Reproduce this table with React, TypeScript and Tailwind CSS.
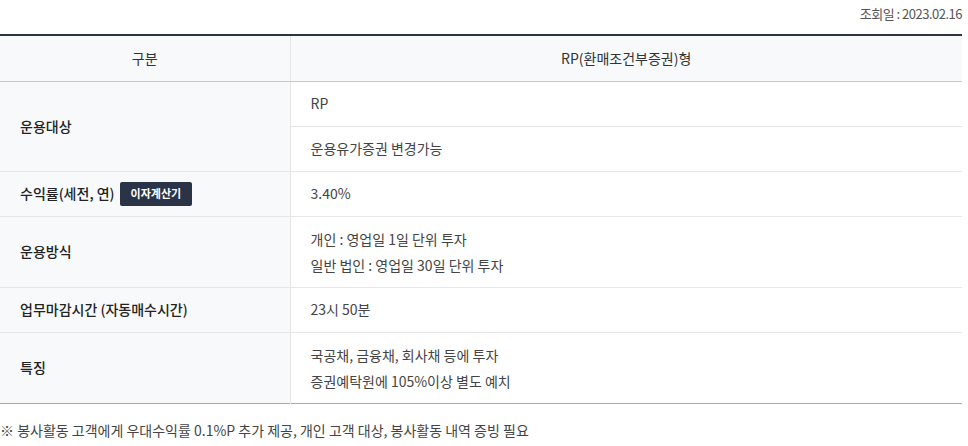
import React from 'react';

const font = { fontFamily: '"Noto Sans CJK KR", "Noto Sans", sans-serif' };

function Th({ children, rowSpan }: { children: React.ReactNode; rowSpan?: number }) {
  return (
    <th
      rowSpan={rowSpan}
      className="border-b border-r border-[#e6e6e6] bg-[#f8f9fb] pl-5 text-left align-middle text-[14px] font-medium text-[#222]"
    >
      {children}
    </th>
  );
}

function Td({ children, lines = 1 }: { children: React.ReactNode; lines?: number }) {
  return (
    <td
      className={`border-b border-[#e6e6e6] pl-5 align-middle text-[14px] text-[#444] ${lines > 1 ? 'h-[71px] leading-[26px]' : 'h-[45px]'}`}
    >
      {children}
    </td>
  );
}

export default function App() {
  return (
    <div className="w-[968px] bg-white pr-[6px]" style={font}>
      <div className="flex h-[34px] items-start justify-end pt-[4px] text-[13px] tracking-[-0.5px] text-[#555]">
        조회일 : 2023.02.16
      </div>
      <table className="w-[962px] border-collapse border-t-2 border-[#2c3347]">
        <colgroup>
          <col className="w-[290px]" />
          <col />
        </colgroup>
        <thead>
          <tr className="h-[46px] bg-[#f8f9fb]">
            <th className="border-b border-r border-b-[#c8c8c8] border-r-[#e6e6e6] text-center text-[14px] font-normal text-[#333]">
              구분
            </th>
            <th className="border-b border-[#c8c8c8] text-center text-[14px] font-normal text-[#333]">
              RP(환매조건부증권)형
            </th>
          </tr>
        </thead>
        <tbody>
          <tr>
            <Th rowSpan={2}>운용대상</Th>
            <Td>RP</Td>
          </tr>
          <tr>
            <Td>운용유가증권 변경가능</Td>
          </tr>
          <tr>
            <Th>
              <span className="flex items-center gap-[5px]">
                수익률(세전, 연)
                <span className="inline-flex h-[24px] items-center rounded-[2px] bg-[#2b3346] px-[11px] text-[11px] font-bold text-white">
                  이자계산기
                </span>
              </span>
            </Th>
            <Td>3.40%</Td>
          </tr>
          <tr>
            <Th>운용방식</Th>
            <Td lines={2}>
              개인 : 영업일 1일 단위 투자
              <br />
              일반 법인 : 영업일 30일 단위 투자
            </Td>
          </tr>
          <tr>
            <Th>업무마감시간 (자동매수시간)</Th>
            <Td>23시 50분</Td>
          </tr>
          <tr className="border-b border-[#aaaaaa]">
            <th className="border-r border-[#e6e6e6] bg-[#f8f9fb] pl-5 text-left align-middle text-[14px] font-medium text-[#222]">
              특징
            </th>
            <td className="h-[71px] pl-5 align-middle text-[14px] leading-[26px] text-[#444]">
              국공채, 금융채, 회사채 등에 투자
              <br />
              증권예탁원에 105%이상 별도 예치
            </td>
          </tr>
        </tbody>
      </table>
      <p className="mt-[16px] text-[14px] text-[#444]">
        ※ 봉사활동 고객에게 우대수익률 0.1%P 추가 제공, 개인 고객 대상, 봉사활동 내역 증빙 필요
      </p>
    </div>
  );
}
